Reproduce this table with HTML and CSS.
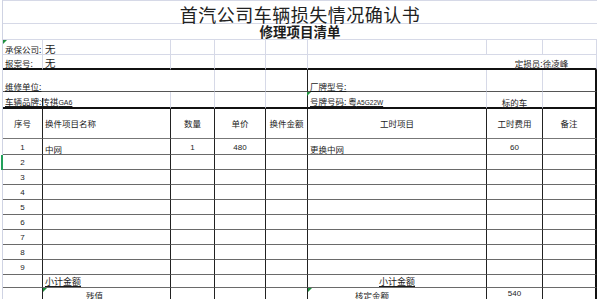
FILE: index.html
```html
<!DOCTYPE html>
<html lang="zh-CN">
<head>
<meta charset="utf-8">
<title>首汽公司车辆损失情况确认书</title>
<link rel="stylesheet" href="styles.css">
</head>
<body>
<div class="page">
  <div class="sheet">
    <!-- title -->
    <div class="c title span8">首汽公司车辆损失情况确认书</div>
    <div class="c subtitle span8">修理项目清单</div>

    <!-- 承保公司 -->
    <div class="c lt tri">承保公司:</div>
    <div class="c lt big">无</div>
    <div class="c lt"></div>
    <div class="c lt"></div>
    <div class="c lt"></div>
    <div class="c lt"></div>
    <div class="c lt"></div>
    <div class="c lt"></div>

    <!-- 报案号 -->
    <div class="c lt thick">报案号:</div>
    <div class="c lt thick big">无</div>
    <div class="c lt thick"></div>
    <div class="c lt thick"></div>
    <div class="c lt thick"></div>
    <div class="c thick"></div>
    <div class="c lt thick span2 center"><span class="u">定损员:徐凌峰</span></div>

    <!-- 维修单位 / 厂牌型号 -->
    <div class="c mid span2"><span class="u">维修单位:</span></div>
    <div class="c lt mid"></div>
    <div class="c lt mid"></div>
    <div class="c dk mid"></div>
    <div class="c lt mid"><span class="u">厂牌型号:</span></div>
    <div class="c lt mid"></div>
    <div class="c dk2 mid"></div>

    <!-- 车辆品牌 / 号牌号码 -->
    <div class="c thick partial"><span class="u">车辆品牌:传祺<span class="lat">GA6</span></span></div>
    <div class="c lt thick"></div>
    <div class="c lt thick"></div>
    <div class="c lt thick"></div>
    <div class="c dk thick tri2"></div>
    <div class="c lt thick"><span class="u">号牌号码:&nbsp;粤<span class="lat sm">A5G22W</span></span></div>
    <div class="c lt thick center"><span class="u">标的车</span></div>
    <div class="c dk2 thick"></div>

    <!-- header -->
    <div class="c hd center">序号</div>
    <div class="c hd">换件项目名称</div>
    <div class="c hd center">数量</div>
    <div class="c hd center">单价</div>
    <div class="c hd center">换件金额</div>
    <div class="c hd center">工时项目</div>
    <div class="c hd center">工时费用</div>
    <div class="c hd2 center">备注</div>

    <!-- rows -->
    <div class="c r center num">1</div><div class="c r">中网</div><div class="c r center num">1</div><div class="c r center num">480</div><div class="c r"></div><div class="c r">更换中网</div><div class="c r center num">60</div><div class="c r2"></div>
    <div class="c r center num sel">2</div><div class="c r"></div><div class="c r"></div><div class="c r"></div><div class="c r"></div><div class="c r"></div><div class="c r"></div><div class="c r2"></div>
    <div class="c r center num">3</div><div class="c r"></div><div class="c r"></div><div class="c r"></div><div class="c r"></div><div class="c r"></div><div class="c r"></div><div class="c r2"></div>
    <div class="c r center num">4</div><div class="c r"></div><div class="c r"></div><div class="c r"></div><div class="c r"></div><div class="c r"></div><div class="c r"></div><div class="c r2"></div>
    <div class="c r center num">5</div><div class="c r"></div><div class="c r"></div><div class="c r"></div><div class="c r"></div><div class="c r"></div><div class="c r"></div><div class="c r2"></div>
    <div class="c r center num">6</div><div class="c r"></div><div class="c r"></div><div class="c r"></div><div class="c r"></div><div class="c r"></div><div class="c r"></div><div class="c r2"></div>
    <div class="c r center num">7</div><div class="c r"></div><div class="c r"></div><div class="c r"></div><div class="c r"></div><div class="c r"></div><div class="c r"></div><div class="c r2"></div>
    <div class="c r center num">8</div><div class="c r"></div><div class="c r"></div><div class="c r"></div><div class="c r"></div><div class="c r"></div><div class="c r"></div><div class="c r2"></div>
    <div class="c r center num">9</div><div class="c r"></div><div class="c r"></div><div class="c r"></div><div class="c r"></div><div class="c r"></div><div class="c r"></div><div class="c r2"></div>

    <!-- 小计 -->
    <div class="c r"></div><div class="c r"><span class="u sub">小计金额</span></div><div class="c r"></div><div class="c r"></div><div class="c r"></div><div class="c r center"><span class="u sub">小计金额</span></div><div class="c r"></div><div class="c r2"></div>

    <!-- 残值 / 核定金额 -->
    <div class="c rl"></div><div class="c rl tri"><span class="u off1">残值</span></div><div class="c rl"></div><div class="c rl"></div><div class="c rl"></div><div class="c rl tri"><span class="u off2">核定金额</span></div><div class="c rl center num">540</div><div class="c rl2"></div>
  </div>
</div>
</body>
</html>
```

FILE: styles.css
```css
html, body {
  margin: 0;
  padding: 0;
  background: #ffffff;
  overflow: hidden;
}

.page {
  padding-left: 2px;
  height: 299px;
}

.sheet {
  border-left: 1px solid #cfd3e3;
  display: grid;
  grid-template-columns: 40px 128px 44px 51px 42px 179px 56px 54px;
  grid-template-rows: 24px 16px 15px 15px 22px 17px 30px 16px repeat(8, 15px) 13px 11px;
  font-family: "Noto Sans CJK SC", "Liberation Sans", sans-serif;
  color: #1c1c1c;
  height: 299px;
}

.c {
  box-sizing: border-box;
  display: flex;
  align-items: flex-end;
  padding: 0 1px 1px 2px;
  font-size: 8.5px;
  line-height: 1;
  white-space: nowrap;
  position: relative;
  min-width: 0;
}

.span8 { grid-column: span 8; }
.span2 { grid-column: span 2; }
.center { justify-content: center; padding-left: 0; padding-right: 0; }

.title {
  justify-content: center;
  align-items: center;
  font-size: 18px;
  line-height: 1;
  letter-spacing: 0.5px;
  border-top: 1px solid #d6d9e7;
  border-bottom: 1px solid #d6d9e7;
  color: #222;
  padding: 3px 0 0;
}

.subtitle {
  justify-content: center;
  align-items: center;
  font-size: 13.5px;
  line-height: 1;
  font-weight: 700;
  border-bottom: 1px solid #d6d9e7;
  padding: 1px 0 0;
}

.lt {
  border-right: 1px solid #d6d9e7;
  border-bottom: 1px solid #d6d9e7;
}

.thick { border-bottom: 2px solid #111; }
.mid { border-bottom: 1px solid #555; }
.dk { border-right: 1px solid #222; }
.dk2 { border-right: 2px solid #111; }

.partial {
  background: linear-gradient(#222, #222) right bottom / 1px 9px no-repeat;
}

.big { font-size: 10.5px; padding-bottom: 0; }

.u {
  text-decoration: underline;
  text-underline-offset: 1px;
}

.lat {
  font-family: "Liberation Sans", sans-serif;
  font-size: 7px;
}
.lat.sm { font-size: 6.5px; }

.hd {
  border-right: 1px solid #222;
  border-bottom: 1px solid #777;
  align-items: center;
  padding-bottom: 0;
  font-size: 8.5px;
}
.hd2 {
  border-right: 2px solid #111;
  border-bottom: 1px solid #777;
  align-items: center;
  padding-bottom: 0;
}

.r {
  border-right: 1px solid #222;
  border-bottom: 1px solid #6a6a6a;
}
.r2 {
  border-right: 2px solid #111;
  border-bottom: 1px solid #6a6a6a;
}
.rl { border-right: 1px solid #222; }
.rl2 { border-right: 2px solid #111; }
.rl, .rl2 { padding-bottom: 0; }

.num {
  font-family: "Liberation Sans", sans-serif;
  font-size: 8px;
  padding-bottom: 2px;
}
.rl.num { padding-bottom: 1px; }

.sub { font-size: 9px; }

.off1 { margin-left: 41px; }
.off2 { margin-left: 45px; }

.sel { box-shadow: -2px 0 0 #22a05b; }

.tri::before,
.tri2::after {
  content: "";
  position: absolute;
  top: 0;
  border-top: 4px solid #1f8f3e;
  border-right: 4px solid transparent;
}
.tri::before { left: 0; }
.tri2::after { left: 100%; top: 0; }
```
